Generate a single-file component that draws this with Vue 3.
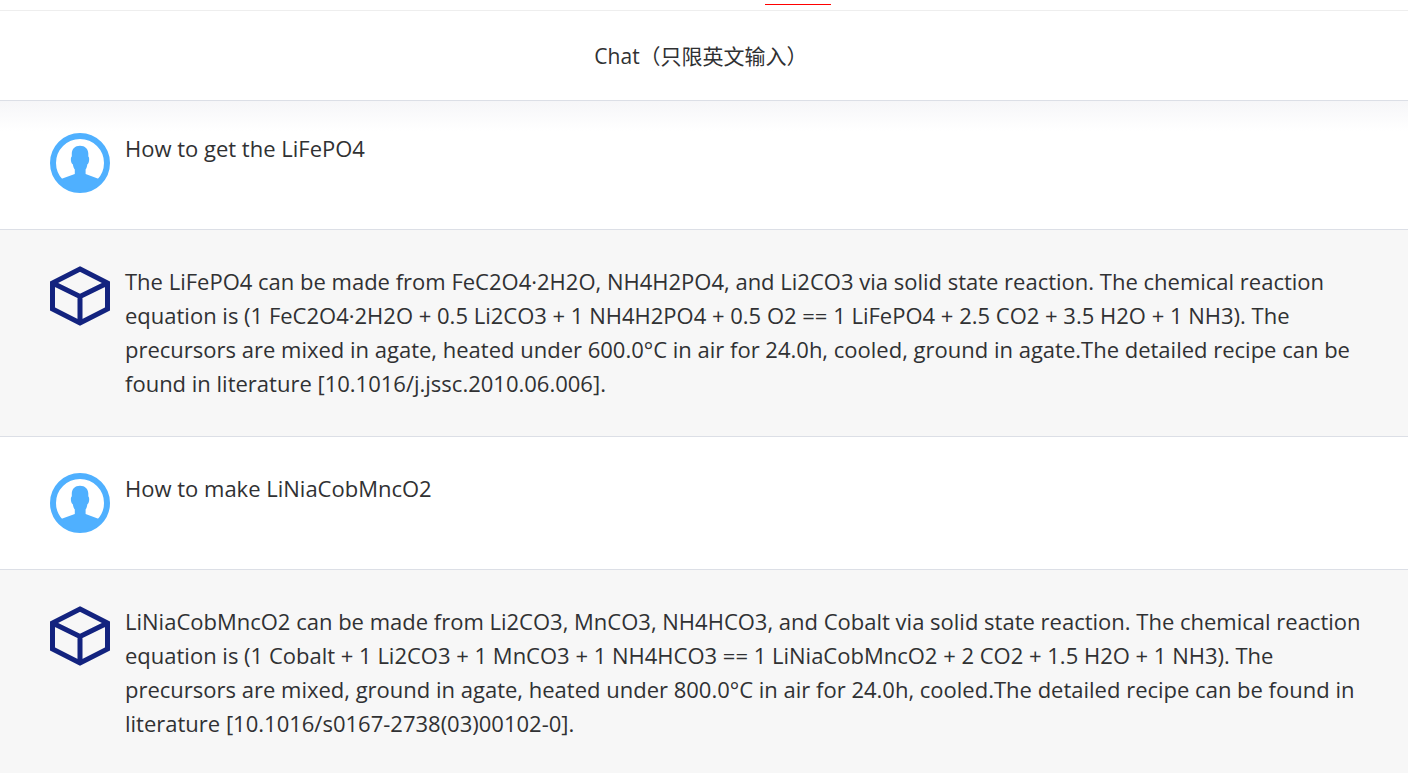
<script setup>
const messages = [
  { role: 'user', lines: ['How to get the LiFePO4'] },
  {
    role: 'bot',
    lines: [
      'The LiFePO4 can be made from FeC2O4·2H2O, NH4H2PO4, and Li2CO3 via solid state reaction. The chemical reaction',
      'equation is (1 FeC2O4·2H2O + 0.5 Li2CO3 + 1 NH4H2PO4 + 0.5 O2 == 1 LiFePO4 + 2.5 CO2 + 3.5 H2O + 1 NH3). The',
      'precursors are mixed in agate, heated under 600.0°C in air for 24.0h, cooled, ground in agate.The detailed recipe can be',
      'found in literature [10.1016/j.jssc.2010.06.006].'
    ]
  },
  { role: 'user', lines: ['How to make LiNiaCobMncO2'] },
  {
    role: 'bot',
    lines: [
      'LiNiaCobMncO2 can be made from Li2CO3, MnCO3, NH4HCO3, and Cobalt via solid state reaction. The chemical reaction',
      'equation is (1 Cobalt + 1 Li2CO3 + 1 MnCO3 + 1 NH4HCO3 == 1 LiNiaCobMncO2 + 2 CO2 + 1.5 H2O + 1 NH3). The',
      'precursors are mixed, ground in agate, heated under 800.0°C in air for 24.0h, cooled.The detailed recipe can be found in',
      'literature [10.1016/s0167-2738(03)00102-0].'
    ]
  }
]
</script>

<template>
  <div class="page">
    <div class="tabs"><span class="tab-line"></span></div>
    <header class="header">
      <h1 class="title">Chat（只限英文输入）</h1>
    </header>
    <main class="messages">
      <article v-for="(message, i) in messages" :key="i" class="message" :class="message.role">
        <svg v-if="message.role === 'user'" class="avatar" viewBox="0 0 60 60" aria-hidden="true">
          <circle cx="30" cy="30" r="27" fill="#fff" stroke="#4fb0ff" stroke-width="6" />
          <path
            fill="#4fb0ff"
            d="M30 12.700C25 12.700 21.800 16 21.800 20.500V23.500C20.300 23.800 20.600 30.500 22.800 31.200C23.200 33.500 23.800 35 24.800 36.500V41L11 46C16 54 22 58 30 58S44 54 49 46L35.600 41V36.500C36.600 35 37 33.500 37.400 31.200C39.500 30.500 39.700 23.800 38.300 23.500V20.500C38.300 16 35 12.700 30 12.700Z"
          />
        </svg>
        <svg v-else class="avatar" viewBox="0 0 60 60" aria-hidden="true">
          <path
            fill="none"
            stroke="#13237f"
            stroke-width="5"
            d="M30 3L57.500 17V43L30 57L2.500 43V17ZM2.500 17L30 30.500L57.500 17M30 30.500V57"
          />
        </svg>
        <p class="text">{{ message.lines.join('\n') }}</p>
      </article>
    </main>
  </div>
</template>

<style>
body {
  margin: 0;
  background: #fff;
}
</style>

<style scoped>
.page {
  box-sizing: border-box;
  height: 100vh;
  overflow: hidden;
  border-bottom: 1px solid #fff;
  background: #fff;
  color: #303133;
  font-family: "Open Sans", "Noto Sans", "Noto Sans CJK SC", sans-serif;
  font-size: 22px;
  line-height: 34px;
}
.tabs {
  display: flex;
  justify-content: center;
  padding: 4px 0 5px 188px;
  border-bottom: 1px solid #eee;
}
.tab-line {
  width: 66px;
  height: 1px;
  background: #f00;
}
.header {
  padding: 28px 6px 27px 0;
  border-bottom: 1px solid #dcdfe6;
  text-align: center;
}
.title {
  margin: 0;
  font-size: 21px;
  font-weight: 400;
}
.message {
  display: flex;
  gap: 15px;
  padding: 34px 30px 36px 50px;
  border-bottom: 1px solid #dcdfe6;
}
.message:first-child {
  padding-top: 30px;
  background: linear-gradient(#f6f6f8, #fff 30px);
}
.bot {
  background: #f7f7f7;
}
.avatar {
  flex: none;
  width: 60px;
  height: 60px;
  margin-top: 2px;
}
.text {
  margin: 0;
  white-space: pre-line;
}
</style>
